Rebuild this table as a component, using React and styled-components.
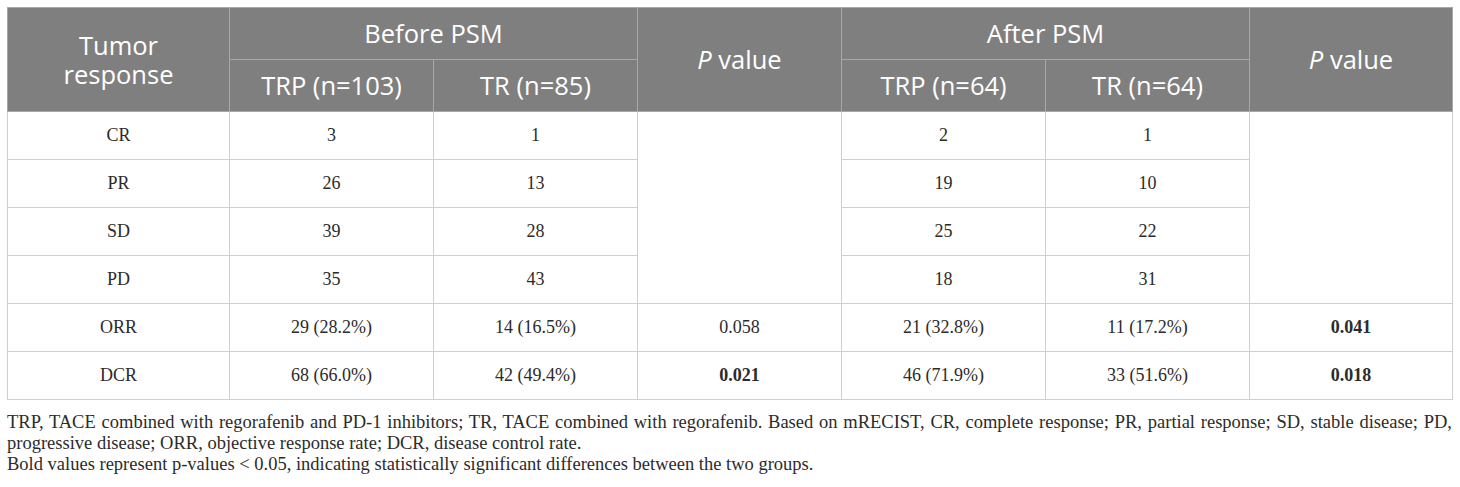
import React from 'react';
import styled, { createGlobalStyle } from 'styled-components';

const GlobalStyle = createGlobalStyle`
  body {
    margin: 0;
    background: #fff;
  }
`;

const rows = [
  { label: 'CR', before: ['3', '1'], after: ['2', '1'] },
  { label: 'PR', before: ['26', '13'], after: ['19', '10'] },
  { label: 'SD', before: ['39', '28'], after: ['25', '22'] },
  { label: 'PD', before: ['35', '43'], after: ['18', '31'] }
];

const summary = [
  {
    label: 'ORR',
    before: ['29 (28.2%)', '14 (16.5%)'],
    p1: '0.058',
    p1Bold: false,
    after: ['21 (32.8%)', '11 (17.2%)'],
    p2: '0.041',
    p2Bold: true
  },
  {
    label: 'DCR',
    before: ['68 (66.0%)', '42 (49.4%)'],
    p1: '0.021',
    p1Bold: true,
    after: ['46 (71.9%)', '33 (51.6%)'],
    p2: '0.018',
    p2Bold: true
  }
];

const widths = [222, 204, 204, 204, 204, 204, 203];

export default function App() {
  return (
    <Wrapper>
      <GlobalStyle />
      <Table>
        <colgroup>
          {widths.map((w, i) => (
            <col key={i} style={{ width: w }} />
          ))}
        </colgroup>
        <thead>
          <HeadRow>
            <Th rowSpan={2}>
              Tumor
              <br />
              response
            </Th>
            <Th colSpan={2}>Before PSM</Th>
            <Th rowSpan={2}>
              <i>P</i> value
            </Th>
            <Th colSpan={2}>After PSM</Th>
            <Th rowSpan={2}>
              <i>P</i> value
            </Th>
          </HeadRow>
          <HeadRow>
            <Th>TRP (n=103)</Th>
            <Th>TR (n=85)</Th>
            <Th>TRP (n=64)</Th>
            <Th>TR (n=64)</Th>
          </HeadRow>
        </thead>
        <tbody>
          {rows.map((r, i) => (
            <BodyRow key={r.label}>
              <Td>{r.label}</Td>
              <Td>{r.before[0]}</Td>
              <Td>{r.before[1]}</Td>
              {i === 0 && <Td rowSpan={4} />}
              <Td>{r.after[0]}</Td>
              <Td>{r.after[1]}</Td>
              {i === 0 && <Td rowSpan={4} />}
            </BodyRow>
          ))}
          {summary.map(r => (
            <BodyRow key={r.label}>
              <Td>{r.label}</Td>
              <Td>{r.before[0]}</Td>
              <Td>{r.before[1]}</Td>
              <Td $bold={r.p1Bold}>{r.p1}</Td>
              <Td>{r.after[0]}</Td>
              <Td>{r.after[1]}</Td>
              <Td $bold={r.p2Bold}>{r.p2}</Td>
            </BodyRow>
          ))}
        </tbody>
      </Table>
      <Notes>
        <p>
          TRP, TACE combined with regorafenib and PD-1 inhibitors; TR, TACE
          combined with regorafenib. Based on mRECIST, CR, complete response;
          PR, partial response; SD, stable disease; PD, progressive disease;
          ORR, objective response rate; DCR, disease control rate.
        </p>
        <p>
          Bold values represent p-values &lt; 0.05, indicating statistically
          significant differences between the two groups.
        </p>
      </Notes>
    </Wrapper>
  );
}

const Wrapper = styled.div`
  padding: 7px 8px 0 7px;
`;

const Table = styled.table`
  width: 1445px;
  border-collapse: collapse;
  table-layout: fixed;
`;

const HeadRow = styled.tr`
  height: 52px;
`;

const Th = styled.th`
  background: #7f7f7f;
  color: #fff;
  font-family: 'Open Sans', 'Noto Sans', sans-serif;
  font-weight: 400;
  font-size: 25.5px;
  line-height: 29px;
  text-align: center;
  vertical-align: middle;
  border: 1px solid #a8a8a8;
  padding: 0 4px;
  i {
    font-style: italic;
  }
`;

const BodyRow = styled.tr`
  height: 48px;
`;

const Td = styled.td`
  font-family: 'Liberation Serif', 'Times New Roman', serif;
  font-size: 18px;
  font-weight: ${p => (p.$bold ? 700 : 400)};
  color: #2b2b2b;
  text-align: center;
  vertical-align: middle;
  border: 1px solid #cfcfcf;
  padding: 0 6px;
`;

const Notes = styled.div`
  width: 1445px;
  margin-top: 12px;
  font-family: 'Liberation Serif', 'Times New Roman', serif;
  font-size: 18.5px;
  line-height: 21px;
  color: #2b2b2b;
  text-align: justify;
  p {
    margin: 0;
  }
`;
